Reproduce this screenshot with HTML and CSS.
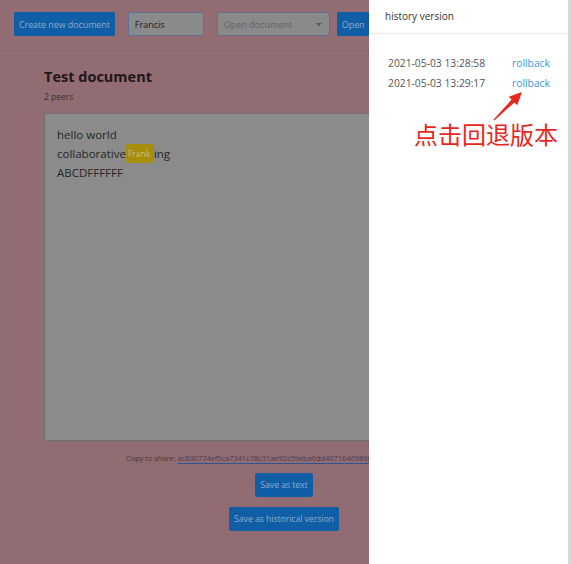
FILE: index.html
```html
<!DOCTYPE html>
<html lang="en">
<head>
<meta charset="utf-8">
<title>Test document</title>
<link rel="stylesheet" href="styles.css">
</head>
<body>
<div class="page">
  <header class="toolbar">
    <button class="btn">Create new document</button>
    <div class="field name-field">Francis</div>
    <div class="field select-field"><span class="placeholder">Open document</span><span class="caret"></span></div>
    <button class="btn btn-open">Open</button>
  </header>
  <main class="content">
    <h1 class="title">Test document</h1>
    <div class="peers">2 peers</div>
    <div class="editor">
      <div class="line">hello world</div>
      <div class="line">collaborative<span class="tag">Frank</span>ing</div>
      <div class="line">ABCDFFFFFF<span class="caret-line"></span></div>
    </div>
    <div class="share">Copy to share: <a class="hash">ac830774ef5ca7341c78c31ae92c59eba0dd4071646989b2d7f01c3e9a54d8e6</a></div>
    <div class="actions">
      <button class="btn">Save as text</button>
      <button class="btn">Save as historical version</button>
    </div>
  </main>
</div>
<aside class="drawer">
  <div class="drawer-head">history version</div>
  <div class="drawer-body">
    <div class="row"><span class="date">2021-05-03 13:28:58</span><a class="rollback">rollback</a></div>
    <div class="row"><span class="date">2021-05-03 13:29:17</span><a class="rollback">rollback</a></div>
  </div>
  <svg class="arrow" width="40" height="40" viewBox="0 0 40 40">
    <polygon points="3.6,34.6 21.6,14.6 18.8,11.8 32,7 27.2,20.2 24.4,17.4 4.4,35.4" fill="#e8271d"/>
  </svg>
  <div class="note">点击回退版本</div>
</aside>
<div class="edge"></div>
</body>
</html>
```
FILE: styles.css
```css
html, body {
  margin: 0;
  padding: 0;
}
body {
  width: 571px;
  height: 564px;
  overflow: hidden;
  background: #916c72;
  font-family: "Open Sans", "Noto Sans", sans-serif;
  position: relative;
}
.page {
  width: 571px;
}
.toolbar {
  display: flex;
  align-items: center;
  gap: 13px;
  padding: 12px 14px 14px;
  border-bottom: 1px solid #86646a;
}
.btn {
  font-family: "Open Sans", "Noto Sans", sans-serif;
  background: #105ea6;
  color: #8eaacb;
  border: none;
  border-radius: 2px;
  height: 24px;
  padding: 0 5px;
  font-size: 9px;
  letter-spacing: -0.1px;
  white-space: nowrap;
  cursor: pointer;
}
.btn-open {
  margin-left: -6px;
}
.field {
  box-sizing: border-box;
  height: 24px;
  border: 1px solid #5f6f95;
  background: #8a8a8a;
  font-size: 9px;
  display: flex;
  align-items: center;
  padding: 0 6px;
  color: #222;
  border-radius: 1px;
}
.name-field {
  width: 76px;
}
.select-field {
  width: 113px;
  justify-content: space-between;
  padding-right: 7px;
}
.placeholder {
  color: #626262;
}
.caret {
  width: 0;
  height: 0;
  border-left: 3.5px solid transparent;
  border-right: 3.5px solid transparent;
  border-top: 3.5px solid #555;
}
.content {
  padding: 14px 44px 0 44px;
  width: 480px;
}
.title {
  margin: 0;
  font-size: 14.5px;
  font-weight: 700;
  color: #1f1618;
  line-height: 24px;
}
.peers {
  font-size: 8.5px;
  color: #3d2f32;
  margin-top: 2px;
  line-height: 12px;
}
.editor {
  margin-top: 10px;
  box-sizing: border-box;
  height: 328px;
  background: #8b8b8b;
  border: 1px solid #6f6f6f;
  padding: 11px 12px;
  font-size: 11.5px;
  line-height: 19px;
  color: #262626;
}
.tag {
  display: inline-block;
  box-sizing: border-box;
  width: 28px;
  height: 19px;
  background: #a88c0c;
  color: #cbbb7c;
  font-size: 8.5px;
  line-height: 19px;
  padding-left: 2px;
  border-radius: 2px;
  vertical-align: -5px;
  white-space: nowrap;
  overflow: hidden;
}
.caret-line {
  display: inline-block;
  width: 1px;
  height: 13px;
  background: #a88c0c;
  vertical-align: -2px;
}
.share {
  margin-top: 11px;
  text-align: center;
  font-size: 7.5px;
  letter-spacing: -0.05px;
  line-height: 12px;
  color: #4a393d;
  white-space: nowrap;
}
.hash {
  color: #4a3a52;
  border-bottom: 1px solid #2f5492;
}
.actions {
  margin-top: 9px;
  display: flex;
  flex-direction: column;
  align-items: center;
  gap: 10px;
}
.actions .btn {
  height: 24px;
  padding: 0 5px;
  font-size: 8.8px;
}
.drawer {
  position: absolute;
  top: 0;
  left: 369px;
  width: 199px;
  height: 564px;
  background: #fff;
}
.edge {
  position: absolute;
  top: 0;
  left: 568px;
  width: 3px;
  height: 564px;
  background: #d8d8d8;
}
.drawer-head {
  height: 34px;
  box-sizing: border-box;
  padding: 9px 16px 0;
  font-size: 10px;
  color: #333;
  border-bottom: 1px solid #ececec;
}
.drawer-body {
  padding: 19px 19px 0 19px;
}
.row {
  display: flex;
  justify-content: space-between;
  font-size: 10.3px;
  line-height: 20px;
}
.date {
  color: #555;
}
.rollback {
  color: #3b98dd;
  width: 37px;
}
.arrow {
  position: absolute;
  left: 121px;
  top: 85px;
}
.note {
  position: absolute;
  left: 45px;
  top: 118px;
  font-family: "Noto Sans CJK SC", sans-serif;
  font-size: 24px;
  line-height: 32px;
  color: #e8271d;
  white-space: nowrap;
}
```
